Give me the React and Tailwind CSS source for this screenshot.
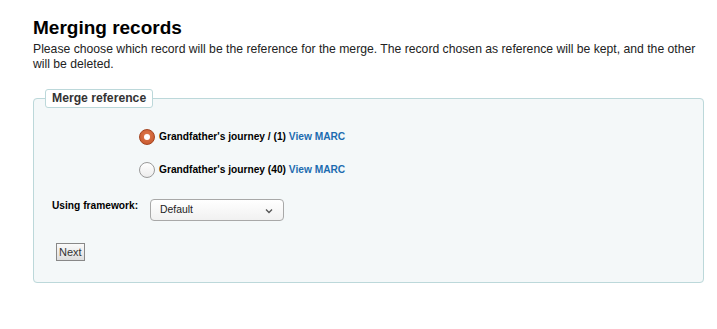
import { useState } from 'react';

function Radio({ checked, onClick }) {
  return (
    <span
      onClick={onClick}
      className={`inline-flex w-4 h-4 shrink-0 items-center justify-center rounded-full border cursor-pointer ${
        checked
          ? 'border-[#a4441f] bg-[radial-gradient(circle_at_50%_40%,#e07a4c,#c4532a)]'
          : 'border-[#9a9a9a] bg-[linear-gradient(#ffffff,#ececec)]'
      }`}
    >
      {checked && <span className="w-[6px] h-[6px] rounded-full bg-white" />}
    </span>
  );
}

export default function App() {
  const [ref, setRef] = useState(1);

  const records = [
    { id: 1, title: "Grandfather's journey / (1)" },
    { id: 40, title: "Grandfather's journey (40)" },
  ];

  return (
    <div className="min-h-[329px] bg-white pl-[33px] pr-[13px] pt-[16px] font-['Liberation_Sans',Arial,sans-serif] text-[#111]">
      <h1 className="text-[19px] font-bold leading-[24px] text-black">Merging records</h1>
      <p className="text-[12.2px] leading-[15px] mt-[2px] text-[#222]">
        Please choose which record will be the reference for the merge. The record chosen as reference will be kept, and the other
        will be deleted.
      </p>

      <fieldset className="mt-[17px] w-[671px] border border-[#bcd8da] rounded-[4px] bg-[#f4f8f9] px-0 pb-[21px]">
        <legend className="ml-[11px] px-[6px] py-[1px] border border-[#bcd8da] rounded-[3px] bg-white text-[12.2px] font-bold leading-[15px] text-[#333]">
          Merge reference
        </legend>

        <div className="flex flex-col gap-[17px] pl-[105px] mt-[21px]">
          {records.map((r) => (
            <label key={r.id} className="flex items-center gap-[4px] text-[10.2px] font-bold leading-4 cursor-pointer">
              <Radio checked={ref === r.id} onClick={() => setRef(r.id)} />
              <span className="text-black">
                {r.title}{' '}
                <a href="#" className="text-[#1c6cb0]">View MARC</a>
              </span>
            </label>
          ))}
        </div>

        <div className="flex items-start mt-[21px] pl-[18px]">
          <span className="w-[98px] text-[10.2px] font-bold leading-[12px] mt-[1px] text-black">Using framework:</span>
          <div className="relative w-[134px] h-[22px] rounded-[4px] border border-[#a8a8a8] bg-[linear-gradient(#ffffff,#f1f1f1)] flex items-center pl-[9px] text-[10.4px] text-[#222]">
            Default
            <svg className="absolute right-[10px] top-[8px]" width="8" height="6" viewBox="0 0 8 6">
              <path d="M1 1.5 L4 4.5 L7 1.5" fill="none" stroke="#555" strokeWidth="1.3" />
            </svg>
          </div>
        </div>

        <div className="flex mt-[22px] pl-[22px]">
          <button className="h-[18px] px-[2px] border border-[#888] bg-[linear-gradient(#fafafa,#dedede)] text-[11px] leading-[16px] text-[#333]">
            Next
          </button>
        </div>
      </fieldset>
    </div>
  );
}
